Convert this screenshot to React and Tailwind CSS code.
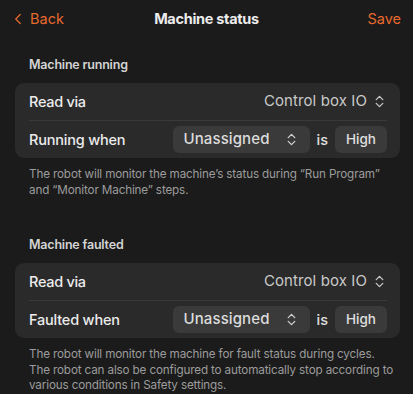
import React from "react";
import { ChevronLeft } from "lucide-react";

function UpDown({ className }) {
  return (
    <svg viewBox="0 0 16 16" className={className} fill="none" stroke="currentColor" strokeWidth="1.4" strokeLinecap="round" strokeLinejoin="round">
      <path d="M4.5 6 8 2.5 11.5 6" />
      <path d="M4.5 10 8 13.5 11.5 10" />
    </svg>
  );
}

function StatusCard({ title, label, lines }) {
  return (
    <section className="pl-[15px] pr-[13px]">
      <h2 className="px-[14px] text-[12.5px] font-semibold text-[#d4d4d4] tracking-[-0.2px] leading-[18px]">{title}</h2>
      <div className="mt-[9px] rounded-[9px] bg-[#2a2a2a] pl-[14px] pr-[13px]">
        <div className="flex h-[38px] items-center justify-between border-b border-[#3a3a3a]">
          <span className="text-[14.5px] font-medium text-[#ececec] tracking-[-0.3px]">Read via</span>
          <span className="flex items-center gap-[5px] text-[15px] text-[#c9c9c9] tracking-[0.1px]">
            Control box IO
            <UpDown className="h-[15px] w-[15px] text-[#c9c9c9]" />
          </span>
        </div>
        <div className="flex h-[37px] items-center">
          <span className="flex-1 text-[14.5px] font-medium text-[#ececec] tracking-[-0.2px]">{label}</span>
          <button className="flex h-[27px] w-[137px] items-center justify-center gap-[14px] rounded-[6px] bg-[#3a3a3a] text-[15px] font-medium text-[#dcdcdc] tracking-[0.1px]">
            Unassigned
            <UpDown className="h-[15px] w-[15px] text-[#d0d0d0]" />
          </button>
          <span className="ml-[7px] mr-[7px] text-[14.5px] font-medium text-[#e0e0e0]">is</span>
          <span className="flex h-[27px] w-[52px] items-center justify-center rounded-[6px] bg-[#3a3a3a] text-[13.5px] font-medium text-[#e0e0e0]">High</span>
        </div>
      </div>
      <p className="mt-[9px] whitespace-nowrap pl-[14px] text-[11.7px] leading-[15.5px] text-[#9c9c9c] tracking-[-0.15px]">
        {lines.map((l, i) => (
          <React.Fragment key={i}>
            {i > 0 && <br />}
            {l}
          </React.Fragment>
        ))}
      </p>
    </section>
  );
}

export default function App() {
  return (
    <div className="h-[394px] w-[413px] overflow-hidden bg-[#1b1b1b]" style={{ fontFamily: "Inter, 'Noto Sans', sans-serif" }}>
      <header className="grid h-[37px] grid-cols-3 items-center px-[9px]">
        <button className="flex items-center gap-[3px] text-[14.5px] text-[#e8692e]">
          <ChevronLeft className="h-[18px] w-[18px]" strokeWidth={1.6} />
          Back
        </button>
        <h1 className="whitespace-nowrap text-center text-[14.5px] font-bold text-[#ececec] tracking-[-0.3px]">Machine status</h1>
        <button className="justify-self-end pr-[3px] text-[14.5px] text-[#e8692e]">Save</button>
      </header>
      <div className="mt-[19px] flex flex-col gap-[38px]">
        <StatusCard
          title="Machine running"
          label="Running when"
          lines={["The robot will monitor the machine’s status during “Run Program”", "and “Monitor Machine” steps."]}
        />
        <StatusCard
          title="Machine faulted"
          label="Faulted when"
          lines={[
            "The robot will monitor the machine for fault status during cycles.",
            "The robot can also be configured to automatically stop according to",
            "various conditions in Safety settings.",
          ]}
        />
      </div>
    </div>
  );
}
